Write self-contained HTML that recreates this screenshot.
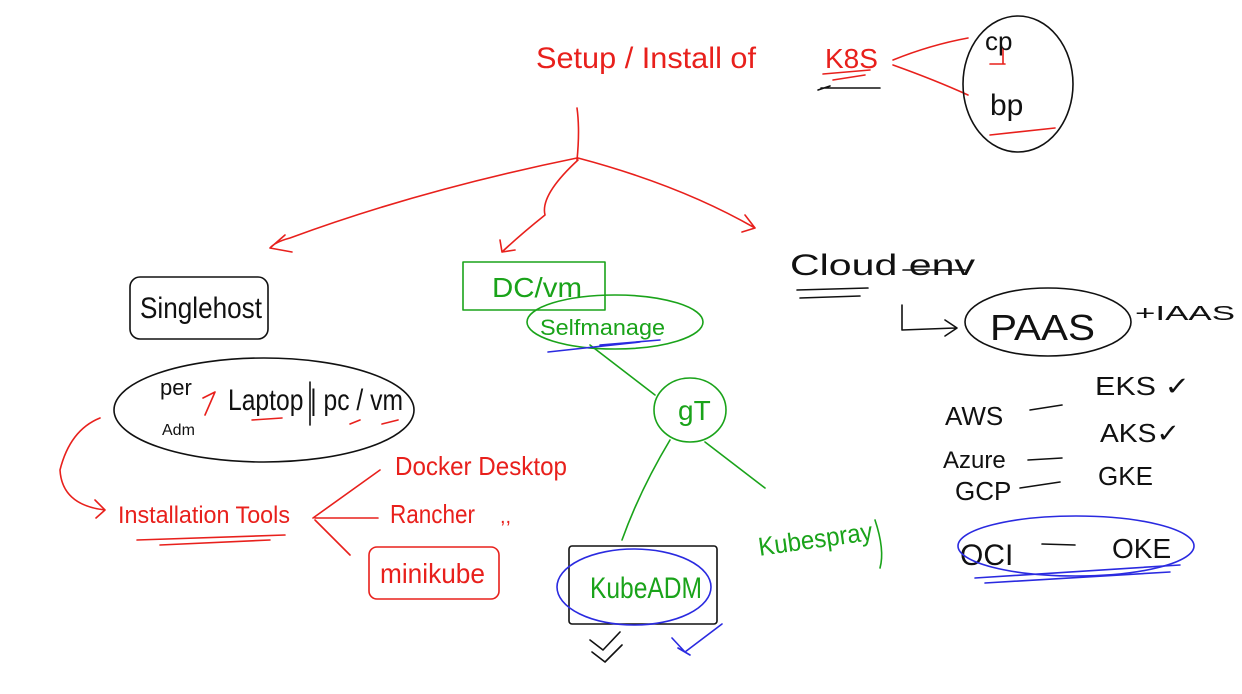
<!DOCTYPE html>
<html><head><meta charset="utf-8"><style>
html,body{margin:0;padding:0;background:#fff;}
svg{display:block}
text{font-family:"Liberation Sans Narrow","Liberation Sans",sans-serif;}
</style></head><body>
<svg width="1242" height="694" viewBox="0 0 1242 694" xmlns="http://www.w3.org/2000/svg" fill="none" stroke-linecap="round" stroke-linejoin="round">
<!-- title -->
<g fill="#e8201c" stroke="none" font-size="30">
<text x="536" y="68" textLength="220" lengthAdjust="spacingAndGlyphs">Setup / Install of</text>
<text x="825" y="68" font-size="28">K8S</text>
</g>
<g stroke="#e8201c" stroke-width="1.6">
<path d="M823 74 L870 70 M833 80 L865 75"/>
<path d="M893 60 Q930 45 968 38 M893 65 Q935 80 968 95"/>
<path d="M990 64 L1005 64 M1003 48 L1003 64 M990 135 L1055 128"/>
<!-- tree -->
<path d="M577 108 Q580 130 577 160"/>
<path d="M577 158 Q420 190 290 238 Q275 242 270 248 M270 248 L285 235 M270 248 L292 252"/>
<path d="M578 160 Q540 195 545 215 Q520 235 502 252 M502 252 L500 240 M502 252 L515 250"/>
<path d="M578 158 Q680 185 755 228 M755 228 L745 215 M755 228 L742 232"/>
<!-- curve to installation tools -->
<path d="M100 418 Q70 430 60 470 Q62 505 105 510 M105 510 L95 500 M105 510 L96 518"/>
<path d="M137 540 L285 535 M160 545 L270 540"/>
<path d="M313 518 L380 470 M315 518 L378 518 M315 520 L350 555"/>
<path d="M203 398 L215 392 L205 415 M252 420 L282 418 M350 424 L360 420 M382 424 L398 420"/>
<rect x="369" y="547" width="130" height="52" rx="8"/>
</g>
<g fill="#e8201c" stroke="none">
<text x="118" y="523" font-size="24" textLength="172" lengthAdjust="spacingAndGlyphs">Installation Tools</text>
<text x="395" y="475" font-size="26" textLength="172" lengthAdjust="spacingAndGlyphs">Docker Desktop</text>
<text x="390" y="523" font-size="26" textLength="85" lengthAdjust="spacingAndGlyphs">Rancher</text>
<text x="500" y="523" font-size="20">,,</text>
<text x="380" y="583" font-size="28" textLength="105" lengthAdjust="spacingAndGlyphs">minikube</text>
</g>
<!-- black -->
<g stroke="#111" stroke-width="1.6">
<ellipse cx="1018" cy="84" rx="55" ry="68"/>
<rect x="130" y="277" width="138" height="62" rx="10"/>
<ellipse cx="264" cy="410" rx="150" ry="52"/>
<path d="M310 382 L310 425"/>
<path d="M821 88 L880 88 M818 90 L830 86"/>
<path d="M797 290 L868 288 M800 298 L860 296 M903 270 L965 270"/>
<path d="M902 305 L902 330 L955 328 M945 320 L957 328 L945 336"/>
<ellipse cx="1048" cy="322" rx="83" ry="34"/>
<path d="M1030 410 L1062 405 M1028 460 L1062 458 M1020 488 L1060 482 M1042 544 L1075 545"/>
<rect x="569" y="546" width="148" height="78" rx="3"/>
<path d="M590 640 L603 650 L620 632 M592 652 L605 662 L622 645"/>
</g>
<g fill="#111" stroke="none">
<text x="985" y="50" font-size="26">cp</text>
<text x="990" y="115" font-size="30">bp</text>
<text x="140" y="318" font-size="30" textLength="122" lengthAdjust="spacingAndGlyphs">Singlehost</text>
<text x="160" y="395" font-size="22">per</text>
<text x="162" y="435" font-size="16">Adm</text>
<text x="228" y="410" font-size="30" textLength="175" lengthAdjust="spacingAndGlyphs">Laptop | pc / vm</text>
<text x="790" y="275" font-size="30" textLength="185" lengthAdjust="spacingAndGlyphs">Cloud  env</text>
<text x="990" y="340" font-size="36" textLength="105" lengthAdjust="spacingAndGlyphs">PAAS</text>
<text x="1135" y="320" font-size="20" textLength="100" lengthAdjust="spacingAndGlyphs">+IAAS</text>
<text x="945" y="425" font-size="26">AWS</text>
<text x="1095" y="395" font-size="26" textLength="95" lengthAdjust="spacingAndGlyphs">EKS ✓</text>
<text x="943" y="468" font-size="24">Azure</text>
<text x="1100" y="442" font-size="26" textLength="80" lengthAdjust="spacingAndGlyphs">AKS✓</text>
<text x="955" y="500" font-size="26">GCP</text>
<text x="1098" y="485" font-size="26">GKE</text>
<text x="960" y="565" font-size="30">OCI</text>
<text x="1112" y="558" font-size="28">OKE</text>
</g>
<!-- green -->
<g stroke="#1aa31a" stroke-width="1.6">
<rect x="463" y="262" width="142" height="48"/>
<ellipse cx="615" cy="322" rx="88" ry="27"/>
<path d="M590 345 L655 395"/>
<ellipse cx="690" cy="410" rx="36" ry="32"/>
<path d="M670 440 Q640 490 622 540 M705 442 L765 488"/>
<path d="M875 520 Q885 550 880 568"/>
</g>
<g fill="#1aa31a" stroke="none">
<text x="492" y="297" font-size="28" textLength="90" lengthAdjust="spacingAndGlyphs">DC/vm</text>
<text x="540" y="335" font-size="22" textLength="125" lengthAdjust="spacingAndGlyphs">Selfmanage</text>
<text x="678" y="420" font-size="28">gT</text>
<text x="758" y="548" font-size="26" textLength="115" lengthAdjust="spacingAndGlyphs" transform="rotate(-8 815 540)">Kubespray</text>
<text x="590" y="598" font-size="30" textLength="112" lengthAdjust="spacingAndGlyphs">KubeADM</text>
</g>
<!-- blue -->
<g stroke="#2a2ae0" stroke-width="1.6">
<path d="M548 352 L640 342 M600 345 L660 340"/>
<ellipse cx="634" cy="587" rx="77" ry="38"/>
<path d="M672 638 L685 652 L722 624 M678 648 L690 655"/>
<ellipse cx="1076" cy="546" rx="118" ry="30"/>
<path d="M975 578 L1180 565 M985 583 L1170 572"/>
</g>
</svg>
</body></html>
